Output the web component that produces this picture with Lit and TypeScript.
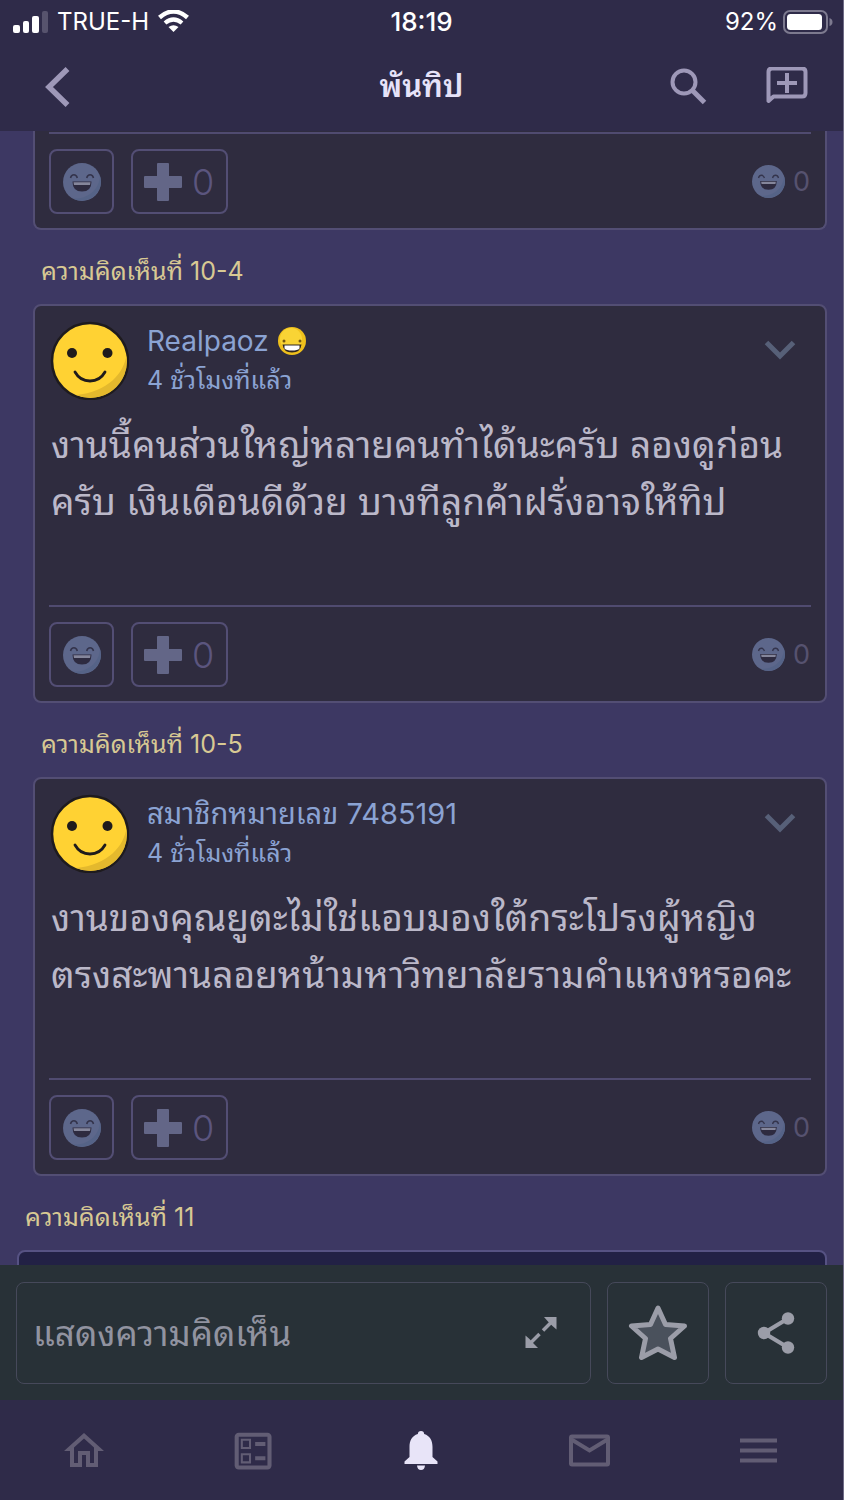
import { LitElement, html, css, svg, nothing } from 'lit';
import { customElement, property } from 'lit/decorators.js';

interface Comment {
  id: string;
  label: string;
  author: string;
  grin: boolean;
  time: string;
  lines: string[];
}

const COMMENTS: Comment[] = [
  {
    id: 'c10-4',
    label: 'ความคิดเห็นที่ 10-4',
    author: 'Realpaoz',
    grin: true,
    time: '4 ชั่วโมงที่แล้ว',
    lines: ['งานนี้คนส่วนใหญ่หลายคนทำได้นะครับ ลองดูก่อน', 'ครับ เงินเดือนดีด้วย บางทีลูกค้าฝรั่งอาจให้ทิป'],
  },
  {
    id: 'c10-5',
    label: 'ความคิดเห็นที่ 10-5',
    author: 'สมาชิกหมายเลข 7485191',
    grin: false,
    time: '4 ชั่วโมงที่แล้ว',
    lines: ['งานของคุณยูตะไม่ใช่แอบมองใต้กระโปรงผู้หญิง', 'ตรงสะพานลอยหน้ามหาวิทยาลัยรามคำแหงหรอคะ'],
  },
];

const laughIcon = (size: number) => html`
  <svg width=${size} height=${size} viewBox="0 0 38 38" aria-hidden="true">
    <circle cx="19" cy="19" r="19" fill="#5d678b" />
    <path d="M37 13a19 19 0 0 1-27 22.500c14 1 26-8 27-22.500Z" fill="#556387" />
    <path d="M7.500 15q.8-3.200 3.400-3.200t3.400 3.200M23.700 15q.8-3.200 3.400-3.200t3.400 3.200" fill="none" stroke="#34344c" stroke-width="1.500" />
    <path d="M9.500 18.500h19q0 10-9.500 10t-9.500-10Z" fill="#2e2b40" />
    <path d="M10.500 19.300h17l-.5 2.700h-16Z" fill="#85869b" />
  </svg>
`;

@customElement('reaction-bar')
export class ReactionBar extends LitElement {
  static styles = css`
    :host {
      display: flex;
      align-items: center;
      gap: 17px;
      padding: 15px 0 14px;
      border-top: 2px solid #504b70;
    }
    .box {
      display: flex;
      align-items: center;
      justify-content: center;
      box-sizing: border-box;
      height: 65px;
      min-width: 65px;
      margin: 0;
      padding: 0 11px;
      border: 2px solid #534e74;
      border-radius: 8px;
      background: none;
      color: #5b557e;
      font: 36px/40px Inter, sans-serif;
      font-weight: 300;
      gap: 10px;
    }
    .vote {
      padding-right: 12px;
    }
    .total {
      display: flex;
      align-items: center;
      gap: 8px;
      margin-left: auto;
      padding-right: 1px;
      color: #56526f;
      font: 27px/32px Inter, sans-serif;
      font-weight: 400;
    }
    svg {
      display: block;
    }
  `;

  render() {
    return html`
      <button class="box" type="button" aria-label="แสดงอารมณ์">${laughIcon(38)}</button>
      <button class="box vote" type="button" aria-label="โหวต">
        <svg width="38" height="38" viewBox="0 0 38 38" aria-hidden="true">
          <path d="M14 0h10q1 0 1 1v12h12q1 0 1 1v10q0 1-1 1H25v12q0 1-1 1H14q-1 0-1-1V25H1q-1 0-1-1V14q0-1 1-1h12V1q0-1 1-1Z" fill="#636687" />
        </svg>
        <span>0</span>
      </button>
      <span class="total">${laughIcon(33)}<span>0</span></span>
    `;
  }
}

@customElement('comment-card')
export class CommentCard extends LitElement {
  @property({ attribute: false }) comment!: Comment;

  static styles = css`
    :host {
      display: block;
      padding: 14px 14px 0;
      border: 2px solid #534e74;
      border-radius: 8px;
      background: #2f2c3f;
    }
    .head {
      display: flex;
      align-items: center;
      height: 80px;
      gap: 18px;
    }
    .who {
      flex: 1;
      min-width: 0;
      color: #8ba3d3;
    }
    .name {
      display: flex;
      align-items: center;
      gap: 9px;
      color: inherit;
      text-decoration: none;
      font-size: 29px;
      line-height: 40px;
    }
    .name.latin {
      font-size: 28px;
    }
    .time {
      display: block;
      font-size: 25px;
      line-height: 38px;
    }
    .more {
      align-self: flex-start;
      margin: 20px 15px 0 0;
      padding: 0;
      border: 0;
      background: none;
    }
    .text {
      margin: 0;
      padding: 16px 2px 75px;
      color: #bbb8c9;
      font-size: 37px;
      line-height: 57px;
    }
    .line {
      display: block;
      white-space: nowrap;
    }
    svg {
      display: block;
    }
  `;

  render() {
    const c = this.comment;
    const latin = /^[\x20-\x7e]+$/.test(c.author);
    return html`
      <div class="head">
        <svg width="80" height="80" viewBox="-1 -1 80 80" aria-hidden="true">
          <circle cx="40" cy="40" r="38" fill="#ffd233" stroke="#1e1b1e" stroke-width="2.500" />
          <path d="M76.500 34C74 52 58 71 26 74A36.700 36.700 0 0 0 76.500 34Z" fill="#e4b92d" />
          <circle cx="22" cy="32" r="5" fill="#1f1b1c" />
          <circle cx="57.500" cy="32" r="5" fill="#1f1b1c" />
          <path d="M25 51q5 9 15 9t15-9" fill="none" stroke="#1f1b1c" stroke-width="2.800" stroke-linecap="round" />
        </svg>
        <div class="who">
          <a class="name ${latin ? 'latin' : ''}" href="#${c.id}">
            <span>${c.author}</span>
            ${c.grin
              ? html`<svg width="28" height="28" viewBox="0 0 28 28" aria-hidden="true">
                  <circle cx="14" cy="14" r="14" fill="#efc01c" />
                  <circle cx="13" cy="12" r="11" fill="#f9d435" />
                  <circle cx="6" cy="14" r="1.500" fill="#75570f" />
                  <circle cx="22" cy="14" r="1.500" fill="#75570f" />
                  <path d="M4.500 17.500h19q-1 8-9.500 8t-9.500-8Z" fill="#2e2520" />
                  <path d="M6.500 18.500h15v3q-2 2-7.500 2t-7.500-2Z" fill="#fff" />
                </svg>`
              : nothing}
          </a>
          <span class="time">${c.time}</span>
        </div>
        <button class="more" type="button" aria-label="ตัวเลือก">
          <svg width="32" height="20" viewBox="0 0 32 20" aria-hidden="true">
            <path d="M2.500 2.500 16 16 29.500 2.500" fill="none" stroke="#576078" stroke-width="5" />
          </svg>
        </button>
      </div>
      <p class="text">${c.lines.map((l) => html`<span class="line">${l}</span>`)}</p>
      <reaction-bar></reaction-bar>
    `;
  }
}

const navItems = [
  {
    label: 'หน้าแรก',
    active: false,
    icon: svg`<path transform="translate(-2 -1) scale(2)" d="M12 5.690l5 4.500V18h-2v-6H9v6H7v-7.810l5-4.500M12 3L2 12h3v8h6v-6h2v6h6v-8h3L12 3z" fill="currentColor" stroke="none" />`,
  },
  {
    label: 'กระทู้',
    active: false,
    icon: svg`<path transform="translate(-2.500 -1.500) scale(2.050)" d="M13 7.500h5v2h-5zm0 7h5v2h-5zM19 3H5c-1.100 0-2 .9-2 2v14c0 1.100.9 2 2 2h14c1.100 0 2-.9 2-2V5c0-1.100-.9-2-2-2zm0 16H5V5h14v14zM11 6H6v5h5V6zm-1 4H7V7h3v3zm1 3H6v5h5v-5zm-1 4H7v-3h3v3z" fill="currentColor" stroke="none" />`,
  },
  {
    label: 'แจ้งเตือน',
    active: true,
    icon: svg`<path d="M22 3q3 0 3.200 3C31 8 33.500 12.500 33.500 19v10l5 4.500V36h-33v-2.500l5-4.500V19c0-6.500 2.500-11 8.300-13Q19 3 22 3ZM18 37.500h8q-.5 4.500-4 4.500t-4-4.500Z" fill="currentColor" stroke="none" />`,
  },
  {
    label: 'ข้อความ',
    active: false,
    icon: svg`<rect x="3" y="8.500" width="37" height="28" rx="1" /><path d="M3.500 11.500l18 11 18-11" />`,
  },
  {
    label: 'เมนู',
    active: false,
    icon: svg`<path d="M3 12.500h37M3 22.500h37M3 32.500h37" />`,
  },
];

@customElement('app-root')
export class AppRoot extends LitElement {
  static styles = css`
    :host {
      display: flex;
      flex-direction: column;
      box-sizing: border-box;
      height: 100vh;
      overflow: hidden;
      border-right: 1px solid #6f6c86;
      background: #3d3863;
      font-family: Inter, 'Noto Sans Thai Looped', Loma, 'Noto Sans Thai', 'Noto Sans', sans-serif;
    }
    svg {
      display: block;
    }
    button {
      margin: 0;
      padding: 0;
      border: 0;
      background: none;
      color: inherit;
    }
    .top {
      flex: none;
      background: #2f2b49;
    }
    .status {
      display: grid;
      grid-template-columns: 1fr auto 1fr;
      align-items: center;
      height: 40px;
      padding: 2px 10px 0;
      color: #fff;
      font-size: 24px;
      line-height: 28px;
    }
    .carrier {
      display: flex;
      align-items: center;
      gap: 9px;
      padding-left: 3px;
    }
    .clock {
      font-size: 26px;
      font-weight: 500;
    }
    .battery {
      display: flex;
      align-items: center;
      justify-content: flex-end;
      gap: 5px;
    }
    .bar {
      display: grid;
      grid-template-columns: 1fr auto 1fr;
      align-items: center;
      height: 89px;
      padding: 0 35px;
      color: #9e98b8;
    }
    .back {
      justify-self: start;
      padding-left: 9px;
    }
    .title {
      margin: 0;
      padding-bottom: 2px;
      color: #e6e2f8;
      font-size: 31px;
      line-height: 48px;
      font-weight: 600;
    }
    .tools {
      display: flex;
      align-items: center;
      justify-content: flex-end;
      gap: 58px;
    }
    .feed {
      flex: 1;
      min-height: 0;
      overflow: hidden;
      padding: 0 16px 0 33px;
    }
    .tail {
      padding: 1px 14px 0;
      border: 2px solid #534e74;
      border-top: 0;
      border-radius: 0 0 8px 8px;
      background: #2f2c3f;
    }
    .label {
      margin: 0;
      padding: 20px 8px 12px;
      color: #d8c993;
      font-size: 25px;
      line-height: 42px;
      font-weight: 400;
    }
    .outer {
      margin-left: -16px;
    }
    .next {
      height: 120px;
      border: 2px solid #565283;
      border-radius: 8px;
      background: #222145;
    }
    .composer {
      flex: none;
      display: flex;
      gap: 16px;
      padding: 17px 16px 16px;
      background: #283137;
      color: #9b9da8;
    }
    .field {
      flex: 1;
      min-width: 0;
      display: flex;
      align-items: center;
      box-sizing: border-box;
      height: 102px;
      padding: 0 32px 0 16px;
      border: 1px solid #46495a;
      border-radius: 8px;
    }
    .input {
      flex: 1;
      min-width: 0;
      height: 60px;
      padding: 0;
      border: 0;
      outline: 0;
      background: none;
      color: inherit;
      font: inherit;
      font-size: 35px;
    }
    .input::placeholder {
      color: #9193a0;
      opacity: 1;
    }
    .square {
      display: grid;
      place-items: center;
      box-sizing: border-box;
      width: 102px;
      height: 102px;
      border: 1px solid #46495a;
      border-radius: 8px;
    }
    .nav {
      flex: none;
      display: grid;
      grid-template-columns: repeat(5, 1fr);
      height: 100px;
      background: #2f2b49;
    }
    .tab {
      display: grid;
      place-items: center;
      color: #625d74;
    }
    .tab.active {
      color: #e8e4f8;
    }
  `;

  render() {
    return html`
      <header class="top">
        <div class="status">
          <span class="carrier">
            <svg width="35" height="22" viewBox="0 0 35 22" aria-hidden="true">
              <rect x="0" y="14" width="7" height="8" rx="2" fill="#fff" />
              <rect x="10" y="10" width="6" height="12" rx="2" fill="#fff" />
              <rect x="19" y="5" width="7" height="17" rx="2" fill="#fff" />
              <rect x="29" y="0" width="6" height="22" rx="2" fill="#57536d" />
            </svg>
            <span>TRUE-H</span>
            <svg width="31" height="24" viewBox="0 1 31 24" aria-hidden="true">
              <path d="M1.500 8.500Q15.500-3.500 29.500 8.500" fill="none" stroke="#fff" stroke-width="4.500" />
              <path d="M7 14Q15.500 7 24 14" fill="none" stroke="#fff" stroke-width="4.200" />
              <path d="M10.500 18Q15.500 14.500 20.500 18L15.500 23Z" fill="#fff" />
            </svg>
          </span>
          <span class="clock">18:19</span>
          <span class="battery">
            <span>92%</span>
            <svg width="50" height="24" viewBox="0 0 50 24" aria-hidden="true">
              <rect x="1" y="1" width="43" height="22" rx="6" fill="none" stroke="#7d7a8f" stroke-width="2" />
              <rect x="4" y="4" width="35" height="16" rx="3.500" fill="#fff" />
              <path d="M46.500 8q3 1 3 4t-3 4Z" fill="#7d7a8f" />
            </svg>
          </span>
        </div>
        <div class="bar">
          <button class="back" type="button" aria-label="ย้อนกลับ">
            <svg width="28" height="44" viewBox="0 0 28 44" aria-hidden="true">
              <path d="M23.500 4 5 22l18.500 18" fill="none" stroke="currentColor" stroke-width="5.500" />
            </svg>
          </button>
          <h1 class="title">พันทิป</h1>
          <div class="tools">
            <button type="button" aria-label="ค้นหา">
              <svg width="38" height="38" viewBox="1 1 38 38" fill="none" stroke="currentColor" aria-hidden="true">
                <circle cx="15" cy="15" r="11.500" stroke-width="4" />
                <path d="m23.500 23.500 12 12" stroke-width="5" />
              </svg>
            </button>
            <button type="button" aria-label="ตั้งกระทู้">
              <svg width="42" height="40" viewBox="0 2 42 40" fill="none" stroke="currentColor" aria-hidden="true">
                <path d="M6 3.500h30q3.500 0 3.500 3.500v21q0 3.500-3.500 3.500H7.500L2.500 36V7q0-3.500 3.500-3.500Z" stroke-width="4" stroke-linejoin="round" />
                <path d="M21 8v20M11 18h20" stroke-width="4" />
              </svg>
            </button>
          </div>
        </div>
      </header>

      <main class="feed">
        <div class="tail"><reaction-bar></reaction-bar></div>
        ${COMMENTS.map(
          (c) => html`
            <h2 class="label">${c.label}</h2>
            <comment-card id=${c.id} .comment=${c}></comment-card>
          `,
        )}
        <section class="outer">
          <h2 class="label">ความคิดเห็นที่ 11</h2>
          <div class="next"></div>
        </section>
      </main>

      <div class="composer">
        <div class="field">
          <input class="input" type="text" placeholder="แสดงความคิดเห็น" aria-label="แสดงความคิดเห็น" />
          <button type="button" aria-label="ขยาย">
            <svg width="34" height="34" viewBox="0 1 34 34" fill="currentColor" aria-hidden="true">
              <path d="M20 2h12.500v12.500l-4-3.500-5-5ZM1.500 20.500l4 3.500 4.500 5 4 4H1.500Z" />
              <path d="M29 5.500 19 15.500M5 29.500 15.500 19" fill="none" stroke="currentColor" stroke-width="3.500" />
            </svg>
          </button>
        </div>
        <button class="square" type="button" aria-label="รายการโปรด">
          <svg width="60" height="60" viewBox="0 0 60 60" aria-hidden="true">
            <path d="m30 5 7.500 16.500 19 1.500-14 12.500 4 19L30 46 13.500 54.500l4-19L3.500 23l19-1.500Z" fill="#4a515c" stroke="currentColor" stroke-width="5" stroke-linejoin="round" />
          </svg>
        </button>
        <button class="square" type="button" aria-label="แชร์">
          <svg width="38" height="42" viewBox="0 0 38 42" fill="currentColor" aria-hidden="true">
            <path d="M31 6.500 7 21l24 14.500" fill="none" stroke="currentColor" stroke-width="4" />
            <circle cx="31" cy="6.500" r="6.200" /><circle cx="7" cy="21" r="6.200" /><circle cx="31" cy="35.500" r="6.200" />
          </svg>
        </button>
      </div>

      <nav class="nav">
        ${navItems.map(
          (n) => html`
            <button class="tab ${n.active ? 'active' : ''}" type="button" aria-label=${n.label}>
              <svg width="44" height="44" viewBox="0 0 44 44" fill="none" stroke="currentColor" stroke-width="4" aria-hidden="true">
                ${n.icon}
              </svg>
            </button>
          `,
        )}
      </nav>
    `;
  }
}
